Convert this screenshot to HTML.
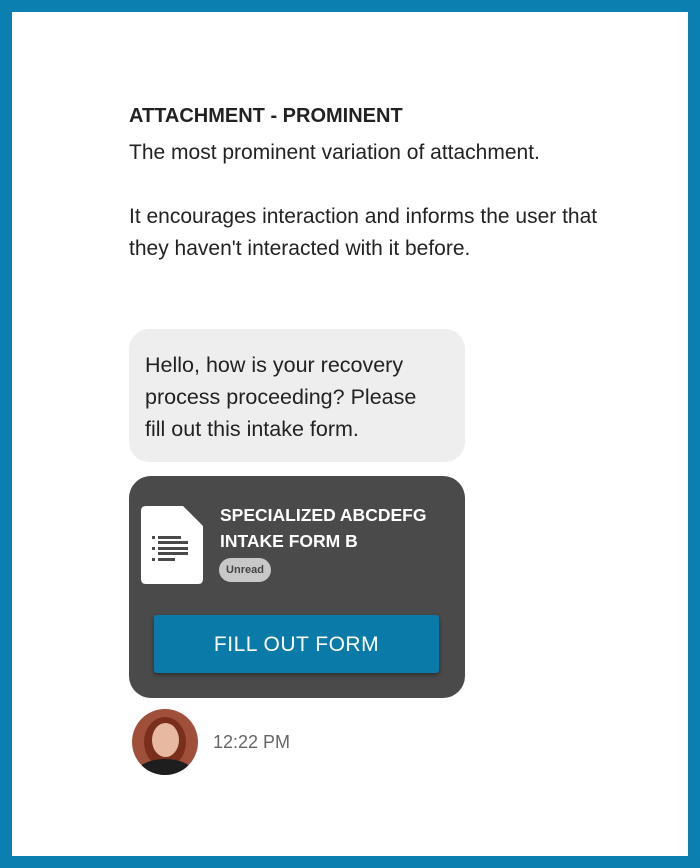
<!DOCTYPE html>
<html><head><style>
*{margin:0;padding:0;box-sizing:border-box}
body{width:700px;height:868px;background:#0a7fb0;font-family:"Liberation Sans",sans-serif;position:relative;overflow:hidden}
.in{position:absolute;left:12px;top:12px;width:676px;height:844px;background:#fff}
.a{position:absolute}
</style></head><body>
<div class="in"></div>
<div class="a" style="left:129px;top:105px;font-size:20px;font-weight:bold;color:#222">ATTACHMENT - PROMINENT</div>
<div class="a" style="left:129px;top:137px;font-size:21px;color:#222;line-height:32px;width:490px">The most prominent variation of attachment.<br><br>It encourages interaction and informs the user that they haven't interacted with it before.</div>
<div class="a" style="left:129px;top:329px;width:336px;height:133px;background:#eeeeee;border-radius:20px;padding:20px 30px 0 16px;font-size:21.5px;line-height:32px;color:#222">Hello, how is your recovery process proceeding? Please fill out this intake form.</div>
<div class="a" style="left:129px;top:476px;width:336px;height:222px;background:#4a4a4a;border-radius:22px"></div>
<svg class="a" style="left:141px;top:506px" width="62" height="78" viewBox="0 0 62 78">
<path d="M5 0H42L62 20V73Q62 78 57 78H5Q0 78 0 73V5Q0 0 5 0Z" fill="#fff"/>
<g fill="#4a4a4a"><rect x="11" y="30" width="3" height="3"/><rect x="17" y="30" width="23" height="3"/><rect x="17" y="35" width="30" height="3"/><rect x="11" y="41" width="3" height="3"/><rect x="17" y="41" width="30" height="3"/><rect x="17" y="46" width="30" height="3"/><rect x="11" y="52" width="3" height="3"/><rect x="17" y="52" width="17" height="3"/></g>
</svg>
<div class="a" style="left:220px;top:502px;font-size:17.5px;font-weight:bold;color:#fff;line-height:26px">SPECIALIZED ABCDEFG<br>INTAKE FORM B</div>
<div class="a" style="left:219px;top:558px;width:52px;height:24px;border-radius:12px;background:#c8c8c8;color:#444;font-size:11px;font-weight:bold;text-align:center;line-height:24px">Unread</div>
<div class="a" style="left:154px;top:615px;width:285px;height:58px;background:#0a7aa8;border-radius:3px;box-shadow:0 2px 4px rgba(0,0,0,.4);color:#fff;font-size:21px;letter-spacing:0.5px;text-align:center;line-height:60px">FILL OUT FORM</div>
<div class="a" style="left:132px;top:709px;width:66px;height:66px;border-radius:50%;background:#a0503a;overflow:hidden">
<div class="a" style="left:12px;top:8px;width:42px;height:50px;border-radius:50%;background:#7a2e1c"></div>
<div class="a" style="left:20px;top:14px;width:27px;height:34px;border-radius:50%;background:#e7b9a0"></div>
<div class="a" style="left:4px;top:50px;width:58px;height:30px;border-radius:50% 50% 0 0;background:#1e1e1e"></div>
</div>
<div class="a" style="left:213px;top:732px;font-size:18px;color:#666">12:22 PM</div>
</body></html>
